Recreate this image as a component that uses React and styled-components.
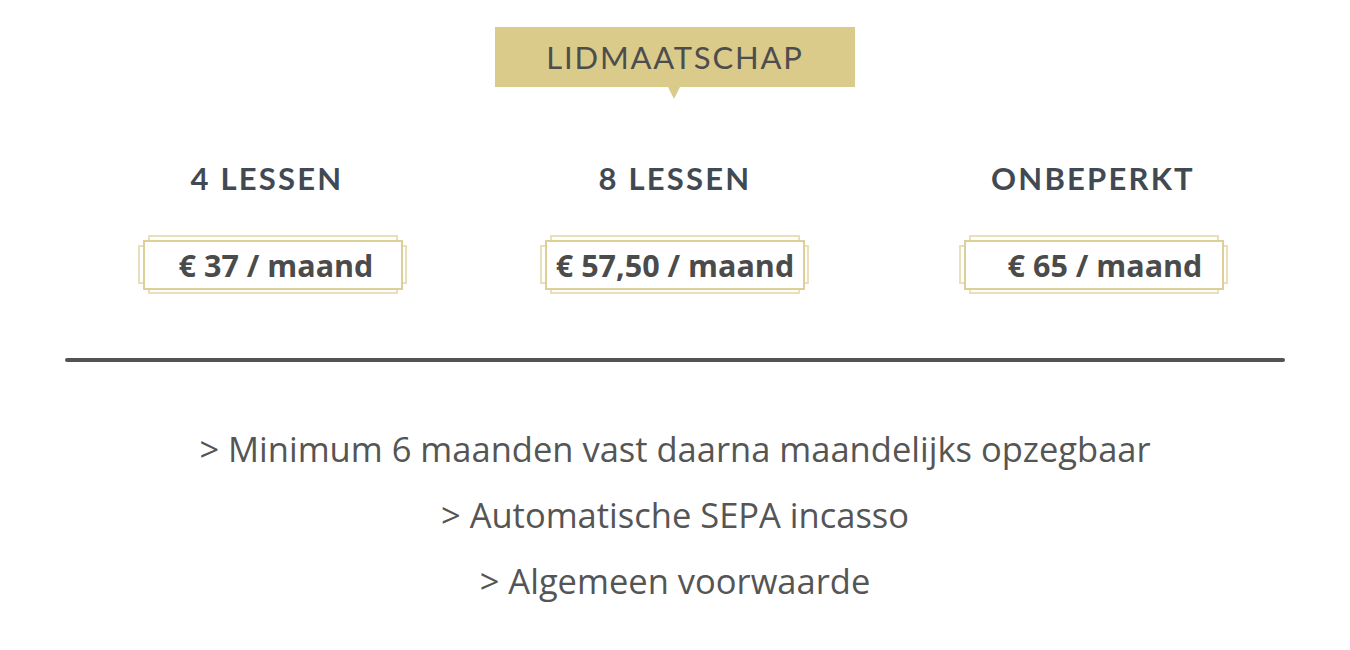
import React from "react";
import styled, { createGlobalStyle } from "styled-components";

const Global = createGlobalStyle`
  html, body { margin: 0; padding: 0; background: #ffffff; }
  body { font-family: "Open Sans", "Liberation Sans", sans-serif; }
`;

const Page = styled.div`
  width: 1350px;
  height: 650px;
  box-sizing: border-box;
  padding-top: 27px;
  display: flex;
  flex-direction: column;
  align-items: center;
  overflow: hidden;
`;

const Badge = styled.div`
  position: relative;
  width: 360px;
  height: 60px;
  background: #dbcb8b;
  display: flex;
  align-items: center;
  justify-content: center;
  font-family: "Lato", "Liberation Sans", sans-serif;
  font-size: 31px;
  font-weight: 400;
  letter-spacing: 1.8px;
  color: #4d4d4d;
  &::after {
    content: "";
    position: absolute;
    left: 173px;
    top: 60px;
    border-left: 6px solid transparent;
    border-right: 6px solid transparent;
    border-top: 12px solid #dbcb8b;
  }
`;

const PlanRow = styled.div`
  display: grid;
  grid-template-columns: 410px 400px 436px;
  width: 1246px;
  margin-left: 26px;
  margin-top: 73px;
`;

const Plan = styled.div`
  display: flex;
  flex-direction: column;
  align-items: center;
`;

const PlanTitle = styled.div`
  font-family: "Lato", "Liberation Sans", sans-serif;
  font-weight: 700;
  font-size: 31px;
  letter-spacing: 2.2px;
  color: #414a53;
  line-height: 36px;
  margin-left: ${(p) => p.$shift || 0}px;
`;

const PriceFrame = styled.div`
  position: relative;
  margin-top: 44px;
  margin-left: ${(p) => p.$shift || 0}px;
  width: 260px;
  height: 50px;
  &::before {
    content: "";
    position: absolute;
    left: 5px;
    right: 5px;
    top: -5px;
    bottom: -4px;
    border: 2px solid #e9dfba;
  }
  &::after {
    content: "";
    position: absolute;
    left: -5px;
    right: -4px;
    top: 5px;
    bottom: 6px;
    border: 2px solid #e9dfba;
  }
`;

const PriceBox = styled.div`
  position: relative;
  z-index: 1;
  box-sizing: border-box;
  width: 100%;
  height: 100%;
  background: #ffffff;
  border: 2px solid #dccf98;
  display: flex;
  align-items: center;
  justify-content: center;
  padding-left: ${(p) => p.$pad || 0}px;
  font-family: "Open Sans", "Liberation Sans", sans-serif;
  font-weight: 700;
  font-size: 30.5px;
  color: #4b4b4b;
  white-space: nowrap;
`;

const Divider = styled.div`
  width: 1220px;
  height: 4px;
  border-radius: 2px;
  background: #545454;
  margin-top: 68px;
`;

const Notes = styled.div`
  margin-top: 54px;
  display: flex;
  flex-direction: column;
  align-items: center;
`;

const Note = styled.div`
  font-family: "Open Sans", "Liberation Sans", sans-serif;
  font-size: 34.5px;
  font-weight: 400;
  line-height: 66px;
  color: #555555;
`;

const plans = [
  { title: "4 LESSEN", price: "€ 37 / maand", pad: 6, shift: -6, frameShift: 6 },
  { title: "8 LESSEN", price: "€ 57,50 / maand", pad: 0, shift: 0, frameShift: 0 },
  { title: "ONBEPERKT", price: "€ 65 / maand", pad: 22, shift: 0, frameShift: 2 },
];

const notes = [
  "> Minimum 6 maanden vast daarna maandelijks opzegbaar",
  "> Automatische SEPA incasso",
  "> Algemeen voorwaarde",
];

export default function App() {
  return (
    <>
      <Global />
      <Page>
        <Badge>LIDMAATSCHAP</Badge>
        <PlanRow>
          {plans.map((p) => (
            <Plan key={p.title}>
              <PlanTitle $shift={p.shift}>{p.title}</PlanTitle>
              <PriceFrame $shift={p.frameShift}>
                <PriceBox $pad={p.pad}>{p.price}</PriceBox>
              </PriceFrame>
            </Plan>
          ))}
        </PlanRow>
        <Divider />
        <Notes>
          {notes.map((n) => (
            <Note key={n}>{n}</Note>
          ))}
        </Notes>
      </Page>
    </>
  );
}
